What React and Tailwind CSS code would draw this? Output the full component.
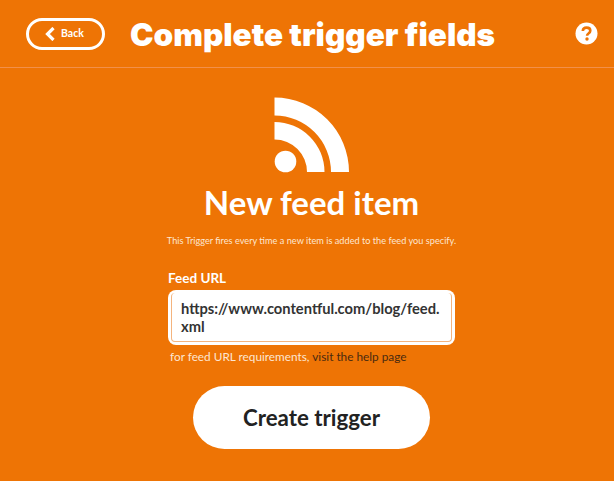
const font = { fontFamily: 'Lato, "Open Sans", sans-serif' };

function RssIcon() {
  return (
    <svg width="76" height="76" viewBox="0 0 76 76" fill="#fff" aria-hidden="true">
      <circle cx="11.5" cy="64.5" r="10.8" />
      <path d="M0.5 25 A50 50 0 0 1 50.5 75 L 50.5 75 L 33 75 A 32.5 32.5 0 0 0 0.5 42.5 Z" />
      <path d="M0.5 0.500 A74.5 74.5 0 0 1 75 75 L 57 75 A 56.5 56.5 0 0 0 0.5 18.500 Z" />
    </svg>
  );
}

function HelpIcon() {
  return (
    <svg width="23" height="23" viewBox="0 0 23 23" aria-hidden="true">
      <circle cx="11.5" cy="11.5" r="11" fill="#fff" />
      <path d="M7.800 9 C7.900 6.800 9.500 5.600 11.600 5.600 C13.800 5.600 15.300 6.900 15.300 8.700 C15.300 10.100 14.500 10.800 13.500 11.500 C12.500 12.200 12.100 12.600 12.100 13.700" fill="none" stroke="#ee7405" strokeWidth="2.600" />
      <circle cx="12" cy="17" r="1.700" fill="#ee7405" />
    </svg>
  );
}

export default function App() {
  return (
    <div className="h-[481px] w-[614px] overflow-hidden bg-[#ee7405] text-white" style={font}>
      <header className="flex h-[68px] items-center border-b border-[#f2904a] pl-[26px] pr-[16px]">
        <button
          type="button"
          className="flex h-[32px] w-[79px] items-center rounded-full border-[3px] border-white pl-[16px] text-[10.500px] font-bold"
        >
          <svg width="10" height="14" viewBox="0 0 10 14" fill="none" stroke="#fff" strokeWidth="3.200" aria-hidden="true">
            <path d="M8.500 1 L2.500 7 L8.500 13" />
          </svg>
          <span className="ml-[6px]">Back</span>
        </button>
        <h1 className="mt-[3px] ml-[25px] font-['Inter'] text-[31.500px] leading-none font-black whitespace-nowrap">Complete trigger fields</h1>
        <div className="ml-auto flex">
          <HelpIcon />
        </div>
      </header>

      <main className="flex flex-col items-center pl-[9px]">
        <div className="mt-[29px] flex">
          <RssIcon />
        </div>
        <h2 className="mt-[9px] text-[33px] leading-[40px] font-bold">New feed item</h2>
        <p className="mt-[12px] text-[9.200px] leading-[14px] text-[#fde6d2]">
          This Trigger fires every time a new item is added to the feed you specify.
        </p>

        <div className="mt-[21px] w-[287px]">
          <label className="block text-[13.500px] leading-[18px] font-bold">Feed URL</label>
          <div className="mt-[3px] rounded-[8px] bg-white p-[3px]">
            <div className="h-[49px] rounded-[4px] border-x border-b border-[#f4b47e] pl-[9px] pt-[6px] text-[14.700px] leading-[18px] font-bold whitespace-nowrap text-[#333333]">
              https://www.contentful.com/blog/feed.
              <br />
              xml
            </div>
          </div>
          <p className="mt-[4px] pl-[2px] text-[11.800px] leading-[16px] text-[#fde6d2]">
            for feed URL requirements, <span className="text-[#4a2a10]">visit the help page</span>
          </p>
        </div>

        <button
          type="button"
          className="mt-[21px] h-[63px] w-[237px] rounded-full bg-white text-[22.300px] font-bold text-[#222222]"
        >
          Create trigger
        </button>
      </main>
    </div>
  );
}
